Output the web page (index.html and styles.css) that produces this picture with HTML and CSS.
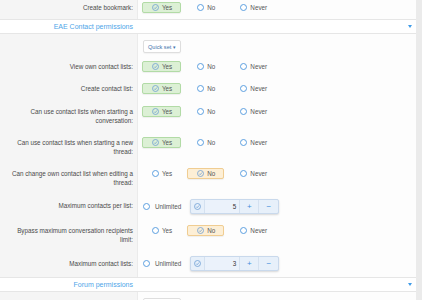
FILE: index.html
```html
<!DOCTYPE html>
<html lang="en">
<head>
    <meta charset="UTF-8">
    <title>User group permissions</title>
    <link rel="stylesheet" href="styles.css">
</head>
<body>
    <div class="page">
        <div class="form">
            <div class="row row-first">
                <div class="label">Create bookmark:</div>
                <div class="ctrl">
                    <div class="choices">
                        <span class="choice choice-yes"><svg class="ico" viewBox="0 0 7 7"><circle cx="3.5" cy="3.5" r="3" /><path d="M2.1 3.6 L3.2 4.7 L5 2.5" /></svg>Yes</span>
                        <span class="choice"><i class="radio"></i>No</span>
                        <span class="choice"><i class="radio"></i>Never</span>
                    </div>
                </div>
            </div>

            <div class="section">
                <span class="section-title">EAE Contact permissions</span>
                <span class="caret"></span>
            </div>

            <div class="row row-quick">
                <div class="label"></div>
                <div class="ctrl"><span class="quick-btn">Quick set <span class="quick-caret">▾</span></span></div>
            </div>

            <div class="row">
                <div class="label">View own contact lists:</div>
                <div class="ctrl">
                    <div class="choices">
                        <span class="choice choice-yes"><svg class="ico" viewBox="0 0 7 7"><circle cx="3.5" cy="3.5" r="3" /><path d="M2.1 3.6 L3.2 4.7 L5 2.5" /></svg>Yes</span>
                        <span class="choice"><i class="radio"></i>No</span>
                        <span class="choice"><i class="radio"></i>Never</span>
                    </div>
                </div>
            </div>

            <div class="row">
                <div class="label">Create contact list:</div>
                <div class="ctrl">
                    <div class="choices">
                        <span class="choice choice-yes"><svg class="ico" viewBox="0 0 7 7"><circle cx="3.5" cy="3.5" r="3" /><path d="M2.1 3.6 L3.2 4.7 L5 2.5" /></svg>Yes</span>
                        <span class="choice"><i class="radio"></i>No</span>
                        <span class="choice"><i class="radio"></i>Never</span>
                    </div>
                </div>
            </div>

            <div class="row">
                <div class="label">Can use contact lists when starting a conversation:</div>
                <div class="ctrl">
                    <div class="choices">
                        <span class="choice choice-yes"><svg class="ico" viewBox="0 0 7 7"><circle cx="3.5" cy="3.5" r="3" /><path d="M2.1 3.6 L3.2 4.7 L5 2.5" /></svg>Yes</span>
                        <span class="choice"><i class="radio"></i>No</span>
                        <span class="choice"><i class="radio"></i>Never</span>
                    </div>
                </div>
            </div>

            <div class="row">
                <div class="label">Can use contact lists when starting a new thread:</div>
                <div class="ctrl">
                    <div class="choices">
                        <span class="choice choice-yes"><svg class="ico" viewBox="0 0 7 7"><circle cx="3.5" cy="3.5" r="3" /><path d="M2.1 3.6 L3.2 4.7 L5 2.5" /></svg>Yes</span>
                        <span class="choice"><i class="radio"></i>No</span>
                        <span class="choice"><i class="radio"></i>Never</span>
                    </div>
                </div>
            </div>

            <div class="row">
                <div class="label">Can change own contact list when editing a thread:</div>
                <div class="ctrl">
                    <div class="choices">
                        <span class="choice"><i class="radio"></i>Yes</span>
                        <span class="choice choice-no"><svg class="ico" viewBox="0 0 7 7"><circle cx="3.5" cy="3.5" r="3" /><path d="M2.1 3.6 L3.2 4.7 L5 2.5" /></svg>No</span>
                        <span class="choice"><i class="radio"></i>Never</span>
                    </div>
                </div>
            </div>

            <div class="row row-spin">
                <div class="label">Maximum contacts per list:</div>
                <div class="ctrl">
                    <span class="unlimited"><i class="radio"></i>Unlimited</span>
                    <div class="spin">
                        <span class="spin-check"><svg class="ico" viewBox="0 0 7 7"><circle cx="3.5" cy="3.5" r="3" /><path d="M2.1 3.6 L3.2 4.7 L5 2.5" /></svg></span>
                        <span class="spin-value">5</span>
                        <span class="spin-btn">+</span>
                        <span class="spin-btn spin-minus">−</span>
                    </div>
                </div>
            </div>

            <div class="row">
                <div class="label">Bypass maximum conversation recipients limit:</div>
                <div class="ctrl">
                    <div class="choices">
                        <span class="choice"><i class="radio"></i>Yes</span>
                        <span class="choice choice-no"><svg class="ico" viewBox="0 0 7 7"><circle cx="3.5" cy="3.5" r="3" /><path d="M2.1 3.6 L3.2 4.7 L5 2.5" /></svg>No</span>
                        <span class="choice"><i class="radio"></i>Never</span>
                    </div>
                </div>
            </div>

            <div class="row row-spin">
                <div class="label">Maximum contact lists:</div>
                <div class="ctrl">
                    <span class="unlimited"><i class="radio"></i>Unlimited</span>
                    <div class="spin">
                        <span class="spin-check"><svg class="ico" viewBox="0 0 7 7"><circle cx="3.5" cy="3.5" r="3" /><path d="M2.1 3.6 L3.2 4.7 L5 2.5" /></svg></span>
                        <span class="spin-value">3</span>
                        <span class="spin-btn">+</span>
                        <span class="spin-btn spin-minus">−</span>
                    </div>
                </div>
            </div>

            <div class="section">
                <span class="section-title">Forum permissions</span>
                <span class="caret"></span>
            </div>

            <div class="row row-quick">
                <div class="label"></div>
                <div class="ctrl"><span class="quick-btn">Quick set <span class="quick-caret">▾</span></span></div>
            </div>
        </div>
        <div class="scrollbar"></div>
    </div>
</body>
</html>
```

FILE: styles.css
```css
body {
    margin: 0;
    padding: 0;
    font-family: "Liberation Sans", Arial, sans-serif;
    font-size: 6.3px;
    color: #464646;
    background: #fdfdfd;
    overflow: hidden;
}
.page {
    display: flex;
    height: 300px;
    overflow: hidden;
}
.form {
    flex: 1;
    background: #fdfdfd;
}
.scrollbar {
    width: 6px;
    background: #ebebeb;
}
.row {
    display: flex;
}
.label {
    width: 126px;
    flex: none;
    box-sizing: content-box;
    padding: 7px 4px 6px 7px;
    line-height: 9px;
    text-align: right;
    background: #f5f5f5;
    border-right: 1px solid #ebebeb;
    color: #4a4a4a;
}
.ctrl {
    flex: 1;
    display: flex;
    align-items: flex-start;
    padding: 6px 0 5.5px 4px;
}
.row-first .label {
    padding-top: 3px;
    padding-bottom: 0;
}
.row-first .ctrl {
    padding-top: 2px;
    padding-bottom: 6px;
}
.choices {
    display: flex;
    gap: 6px;
}
.choice {
    display: flex;
    align-items: center;
    gap: 3px;
    height: 9px;
    padding: 0 8px 0 9px;
    border: 1px solid transparent;
    border-radius: 2px;
    color: #555;
}
.choice-yes {
    background: #dcf0d5;
    border-color: #b2dba6;
    box-shadow: 0 1px 1px rgba(0,0,0,0.06);
}
.choice-no {
    background: #fdefd6;
    border-color: #f0cd92;
    box-shadow: 0 1px 1px rgba(0,0,0,0.06);
}
.ico {
    width: 7px;
    height: 7px;
    flex: none;
    fill: none;
    stroke: #6f9fd4;
    stroke-width: 0.8;
}
.radio {
    display: block;
    width: 5px;
    height: 5px;
    flex: none;
    border: 1px solid #5c9fe0;
    border-radius: 50%;
    background: #fff;
}
.section {
    display: flex;
    align-items: center;
    justify-content: space-between;
    height: 13px;
    background: #fff;
    border-top: 1px solid #e6e6e6;
    border-bottom: 1px solid #e6e6e6;
}
.section-title {
    width: 133px;
    text-align: right;
    font-size: 7px;
    color: #4ea5e8;
}
.caret {
    margin-right: 4px;
    width: 0;
    height: 0;
    border-left: 2.5px solid transparent;
    border-right: 2.5px solid transparent;
    border-top: 3px solid #3f9be8;
}
.row-quick .label {
    padding: 0 4px 0 7px;
}
.row-quick .ctrl {
    padding: 6px 0 1.5px 5px;
}
.quick-btn {
    display: flex;
    align-items: center;
    height: 11px;
    padding: 0 4px;
    border: 1px solid #dedede;
    border-radius: 2px;
    background: #fff;
    font-size: 5.6px;
    color: #3f74ad;
    box-shadow: 0 1px 1px rgba(0,0,0,0.04);
}
.quick-caret {
    margin-left: 2px;
    font-size: 5px;
}
.row-spin .label {
    padding-top: 8.5px;
}
.row-spin .ctrl {
    align-items: center;
    align-self: flex-start;
    padding-left: 5px;
}
.unlimited {
    display: flex;
    align-items: center;
    gap: 5px;
    margin-right: 9px;
    color: #555;
}
.spin {
    display: flex;
    height: 13px;
    border: 1px solid #c9d9ec;
    border-radius: 2px;
    background: #e7f0fa;
    box-shadow: 0 1px 2px rgba(0,0,0,0.15);
}
.spin-check {
    display: flex;
    align-items: center;
    justify-content: center;
    width: 13px;
    border-right: 1px solid #d4e1f0;
}
.spin-value {
    width: 31px;
    padding-right: 3px;
    text-align: right;
    line-height: 13px;
    color: #333;
    background: #ebf2fb;
}
.spin-btn {
    display: flex;
    align-items: center;
    justify-content: center;
    width: 18px;
    border-left: 1px solid #d4e1f0;
    color: #3f8fdc;
    font-size: 8px;
}
.spin-minus {
    width: 19px;
}
```
